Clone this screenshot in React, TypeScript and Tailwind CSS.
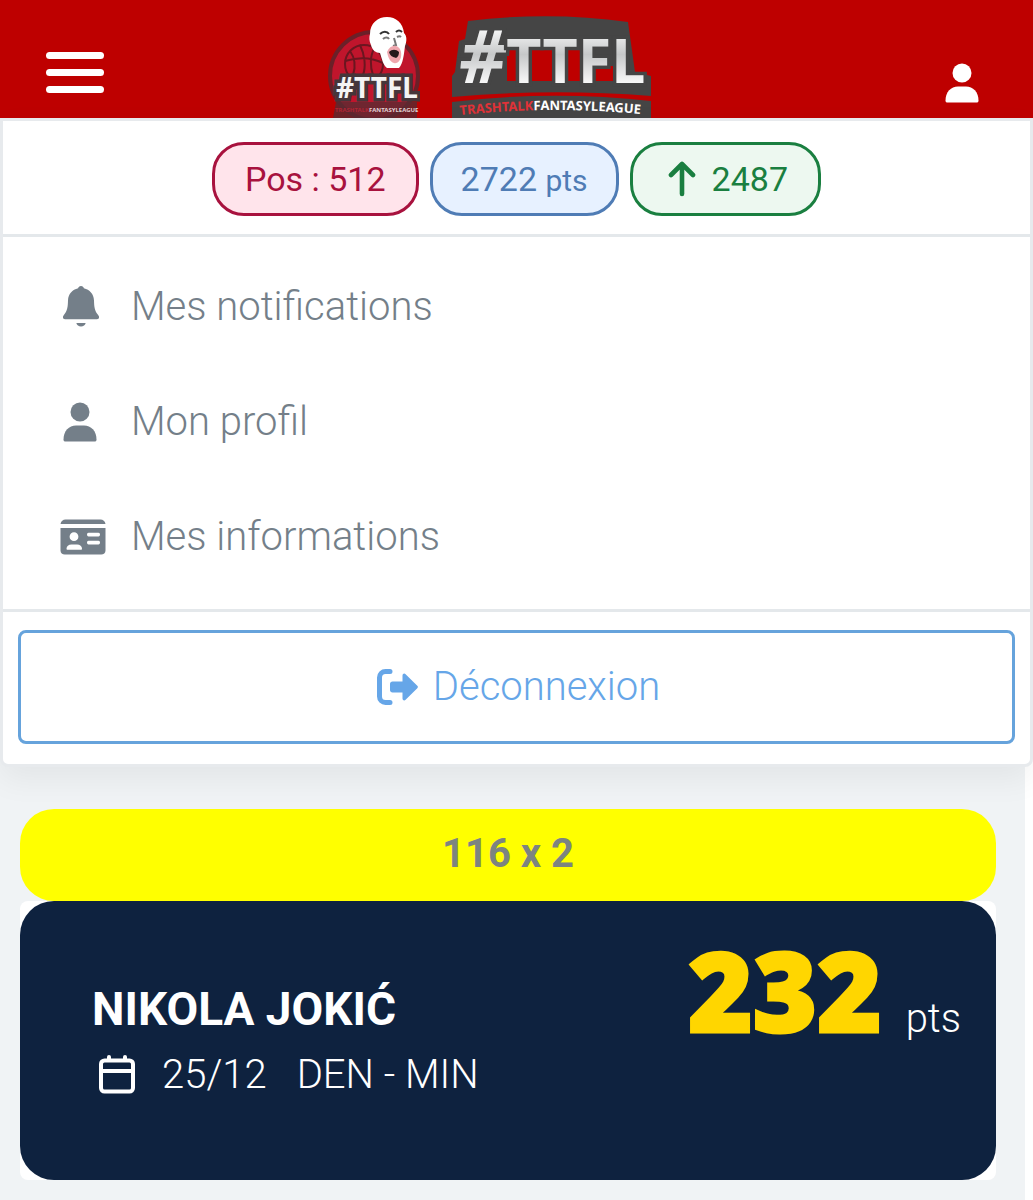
import type { ReactNode } from 'react'

type IconProps = { className?: string }

function UserIcon({ className }: IconProps) {
	return (
		<svg viewBox="0 0 34 40" fill="currentColor" aria-hidden="true" className={className}>
			<circle cx="17" cy="10" r="9.5" />
			<path d="M0.5 37.5C0.5 29 6 23.5 13 23.5h8c7 0 12.500 5.500 12.500 14 0 1.500-.7 2-2 2h-29c-1.300 0-2-.5-2-2Z" />
		</svg>
	)
}

function BellIcon({ className }: IconProps) {
	return (
		<svg viewBox="0 0 36 41" fill="currentColor" aria-hidden="true" className={className}>
			<path d="M18 0c-1.600 0-2.700 1-2.900 2.300C9.300 3.700 5.300 8 5 14.500c-.2 6.500-.5 10-4.300 14.800-1.600 2-.7 3.900 1.300 3.900h32c2 0 2.900-1.900 1.300-3.900-3.800-4.800-4.100-8.300-4.300-14.800-.3-6.500-4.300-10.800-10.100-12.200C20.700 1 19.600 0 18 0Z" />
			<path d="M13.300 37h9.400c-.6 2.200-2.300 3.600-4.700 3.600s-4.100-1.400-4.700-3.600Z" />
		</svg>
	)
}

function CardIcon({ className }: IconProps) {
	return (
		<svg viewBox="0 0 46 36" fill="currentColor" aria-hidden="true" className={className}>
			<path d="M0.500 5C1 2 3 0.500 5.500 0.500h35C43 .5 45 2 45.500 5Z" />
			<path
				fillRule="evenodd"
				d="M0.500 9h45v22.500c0 2.500-1.800 4-4.300 4H4.800c-2.500 0-4.300-1.500-4.300-4ZM14 13.300a4.400 4.400 0 1 0 0 8.800 4.400 4.400 0 0 0 0-8.800ZM11.500 25.500c-3 0-5 1.700-5 4.200 0 .6.400 1 1 1h13.500c.6 0 1-.4 1-1 0-2.500-2-4.200-5-4.200ZM28.500 13.700c-2 0-2 3.700 0 3.700H38.500c2 0 2-3.700 0-3.700ZM28.500 21.700c-2 0-2 3.700 0 3.700H38.500c2 0 2-3.700 0-3.700Z"
			/>
		</svg>
	)
}

function LogoutIcon({ className }: IconProps) {
	return (
		<svg viewBox="0 0 42 36" fill="none" aria-hidden="true" className={className}>
			<path d="M13 2.500H8.500a6 6 0 0 0-6 6v19a6 6 0 0 0 6 6H13" stroke="currentColor" strokeWidth="5" strokeLinecap="round" />
			<path
				d="M15.500 12.500h10V6.500c0-1.800 1.900-2.600 3.100-1.300L40.300 16.800c.8.700.8 1.700 0 2.400L28.600 30.800c-1.200 1.300-3.100.5-3.100-1.300V23.500h-10c-1.500 0-2.500-1-2.500-2.500v-6c0-1.500 1-2.500 2.500-2.500Z"
				fill="currentColor"
			/>
		</svg>
	)
}

function ArrowUpIcon({ className }: IconProps) {
	return (
		<svg viewBox="0 0 28 36" fill="none" stroke="currentColor" strokeWidth="4.600" strokeLinecap="round" strokeLinejoin="round" aria-hidden="true" className={className}>
			<path d="M14 33V3M3 14L14 3l11 11" />
		</svg>
	)
}

function CalendarIcon({ className }: IconProps) {
	return (
		<svg viewBox="0 0 36 40" fill="none" stroke="currentColor" strokeWidth="4" strokeLinecap="round" aria-hidden="true" className={className}>
			<rect x="2" y="5.500" width="32" height="31" rx="3.500" />
			<path d="M2 16h32M10 2v3M26 2v3" />
		</svg>
	)
}

function BadgeLogo() {
	return (
		<svg viewBox="0 0 96 106" className="h-[106px] w-24" role="img" aria-label="TTFL">
			<circle cx="50" cy="62" r="44" fill="#c0152c" stroke="#6b2028" strokeWidth="4" />
			<g fill="none" stroke="#6b1620" strokeWidth="2">
				<circle cx="40" cy="50" r="19" />
				<path d="M21 47c13-4 26-4 38 2M36 31c5 10 6 22 3 30M26 37c5 7 6 15 3 24M50 35c-4 7-4 18-1 26" />
			</g>
			<path
				d="M46 20C46 9 54 3 63 3s16 6 17 16c3 3 3 8 1 13-1 8-2 18-6 22H63c-4-3-5-9-7-15-4 0-8-3-9-8-2-4-2-8-1-11Z"
				fill="#fff"
			/>
			<path d="M56 20c3-3 7-3 9 0M72 18c2-2 4-2 6 0" stroke="#333" strokeWidth="2" fill="none" />
			<path d="M59 25c2-2 5-2 6 0M73 23c2-1 3-1 4 0M70 24l2 7-3 1" stroke="#777" strokeWidth="2" fill="none" />
			<path d="M63 38c2-5 6-7 9-6 4 1 6 6 5 11-1 4-4 7-7 6-4-1-6-6-7-11Z" fill="#efa7ae" />
			<path d="M65 38c3-3 7-3 10 0 0 3-1 5-3 6-3-1-6-2-7-6Z" fill="#241a1c" />
			<path d="M12 88h81v16H9Z" fill="#5a2a32" opacity=".8" />
			<text
				x="12"
				y="84"
				className="font-['Noto_Sans',sans-serif] text-[28px] font-bold"
				fill="#f4f4f4"
				stroke="#46363a"
				strokeWidth="7"
				paintOrder="stroke"
			>
				#TTFL
			</text>
			<text x="11" y="98" className="font-['Noto_Sans',sans-serif] text-[6px] font-bold">
				<tspan fill="#b02636">TRASHTALK</tspan>
				<tspan fill="#e2d4d6">FANTASYLEAGUE</tspan>
			</text>
		</svg>
	)
}

function WordLogo() {
	return (
		<svg viewBox="0 0 206 104" className="h-[104px] w-[206px]" role="img" aria-label="TrashTalk Fantasy League">
			<defs>
				<linearGradient id="steel" x1="0" y1="0" x2="0" y2="1">
					<stop offset="0.2" stopColor="#ffffff" />
					<stop offset="0.5" stopColor="#c6c8c9" />
					<stop offset="0.8" stopColor="#fafafa" />
				</linearGradient>
				<path id="tagline" d="M8 101Q101 91 198 101" />
			</defs>
			<path
				fillRule="evenodd"
				d="M16 7Q98-3 176 8L183 58 199 62V82Q100 74 0 83V62L3 58 7 27 13 25ZM55 36h13v31h-13ZM80 36h20v31h-20ZM115 36h13v31h-13ZM141 52h21v15h-21Z"
				fill="#454545"
			/>
			<path d="M0 88Q100 76 199 87V106H0Z" fill="#454545" />
			<text
				x="7"
				y="69"
				className="font-['Noto_Sans',sans-serif] text-[61px] font-bold"
				fill="url(#steel)"
				stroke="#454545"
				strokeWidth="7"
				paintOrder="stroke"
			>
				<tspan className="text-[73px] italic">#</tspan>
				TTFL
			</text>
			<text className="font-['Noto_Sans',sans-serif] text-[13px] font-bold">
				<textPath href="#tagline">
					<tspan fill="#e03238">TRASHTALK</tspan>
					<tspan fill="#fff">FANTASYLEAGUE</tspan>
				</textPath>
			</text>
		</svg>
	)
}

function MenuLink({ icon, children }: { icon: ReactNode; children: ReactNode }) {
	return (
		<li>
			<a href="#" className="flex h-[115px] items-center pl-[57px] text-[40px] font-light text-[#747f89]">
				<span className="flex w-[71px] items-center">{icon}</span>
				{children}
			</a>
		</li>
	)
}

export default function App() {
	return (
		<div className="min-h-screen bg-white font-[Roboto,sans-serif]">
			<header className="flex h-[118px] justify-between overflow-hidden bg-[#be0000] text-white">
				<button type="button" aria-label="Menu" className="mt-[52px] ml-[46px] flex h-[41px] w-[58px] flex-col justify-between">
					<span className="h-[7px] w-full rounded-full bg-white" />
					<span className="h-[7px] w-full rounded-full bg-white" />
					<span className="h-[7px] w-full rounded-full bg-white" />
				</button>
				<a href="#" className="flex gap-8 pt-[14px] pr-[68px]">
					<BadgeLogo />
					<WordLogo />
				</a>
				<button type="button" aria-label="Mon compte" className="mt-[63px] mr-[54px] h-10">
					<UserIcon className="h-10 w-[34px]" />
				</button>
			</header>

			<div className="mr-2 bg-[#f0f3f5]">
				<div className="relative -mr-2 rounded-b-lg border-3 border-[#e7eaed] bg-white shadow-[0_12px_32px_rgba(0,0,0,0.06)]">
					<div className="flex justify-center gap-[11px] border-b-3 border-[#e4e8eb] pt-[21px] pb-[18px] text-[34px]">
						<span className="flex h-[74px] items-center rounded-[32px] border-3 border-[#a8123e] bg-[#ffe4eb] px-[30px] text-[#a8123e]">
							Pos : 512
						</span>
						<span className="flex h-[74px] items-center rounded-[32px] border-3 border-[#4f7cb5] bg-[#e7f1ff] px-[28px] text-[#4f7cb5]">
							<span>
								2722 <span className="text-[30px]">pts</span>
							</span>
						</span>
						<span className="flex h-[74px] items-center gap-4 rounded-[32px] border-3 border-[#1a7f40] bg-[#edf8f0] pr-[30px] pl-[35px] text-[#1a7f40]">
							<ArrowUpIcon className="h-9 w-7" />
							2487
						</span>
					</div>

					<ul className="border-b-3 border-[#e4e8eb] pt-3 pb-[15px]">
						<MenuLink icon={<BellIcon className="ml-[3px] h-[41px] w-9" />}>Mes notifications</MenuLink>
						<MenuLink icon={<UserIcon className="ml-[3px] h-10 w-[34px]" />}>Mon profil</MenuLink>
						<MenuLink icon={<CardIcon className="h-9 w-[46px]" />}>Mes informations</MenuLink>
					</ul>

					<div className="px-[15px] pt-[18px] pb-5">
						<button
							type="button"
							className="flex h-[114px] w-full items-center justify-center gap-[14px] rounded-lg border-3 border-[#66a3dc] pl-1 text-[40px] font-light text-[#66a6e8]"
						>
							<LogoutIcon className="h-9 w-[42px]" />
							Déconnexion
						</button>
					</div>
				</div>

				<main className="pt-[42px] pr-[29px] pb-5 pl-5">
					<div className="flex h-[92px] items-center justify-center rounded-[34px] bg-[#ffff00] pb-[2px] text-[40px] font-bold text-[#7c8480]">
						116 x 2
					</div>
					<div className="rounded-lg bg-white">
						<article className="flex h-[279px] justify-between rounded-[34px] bg-[#0e223f] pr-[35px] pl-[72px] text-white">
							<div className="pt-[78px]">
								<h2 className="text-[46px] leading-[60px] font-bold">NIKOLA JOKIĆ</h2>
								<p className="flex items-center text-[40px] leading-[72px] font-light">
									<CalendarIcon className="mr-[27px] ml-[7px] h-10 w-9" />
									<span className="mr-[30px]">25/12</span>
									<span>DEN - MIN</span>
								</p>
							</div>
							<p className="flex items-baseline gap-6 pt-[18px] text-[40px] font-light">
								<strong className="font-['Noto_Sans',sans-serif] text-[110px] leading-[140px] font-black text-[#ffd600] [-webkit-text-stroke:3px_#ffd600]">
									232
								</strong>
								pts
							</p>
						</article>
					</div>
				</main>
			</div>
		</div>
	)
}
